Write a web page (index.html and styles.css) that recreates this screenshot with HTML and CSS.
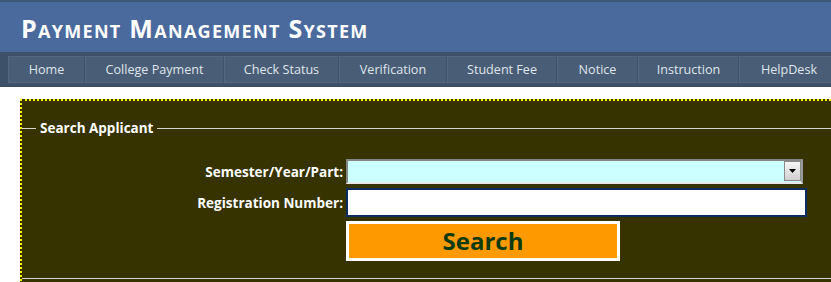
FILE: index.html
```html
<!DOCTYPE html>
<html>
<head>
<meta charset="utf-8">
<link rel="stylesheet" href="styles.css">
</head>
<body>
<header class="banner">
  <h1 class="title">Payment Management System</h1>
</header>
<nav class="menu">
  <a class="menu-item w-home">Home</a>
  <a class="menu-item w-college">College Payment</a>
  <a class="menu-item w-check">Check Status</a>
  <a class="menu-item w-verify">Verification</a>
  <a class="menu-item w-fee">Student Fee</a>
  <a class="menu-item w-notice">Notice</a>
  <a class="menu-item w-instr">Instruction</a>
  <a class="menu-item w-help">HelpDesk</a>
</nav>
<main class="panel">
  <fieldset class="search-set">
    <legend class="search-legend">Search Applicant</legend>
    <div class="form-grid">
      <label class="form-label">Semester/Year/Part:</label>
      <div class="select-wrap">
        <select class="semester-select"><option></option></select>
        <span class="select-btn">
          <svg width="8" height="5" viewBox="0 0 8 5"><path d="M0 0H7L3.5 4Z" fill="#000"/></svg>
        </span>
      </div>
      <label class="form-label">Registration Number:</label>
      <input class="reg-input" type="text">
      <span></span>
      <button class="search-btn" type="button">Search</button>
    </div>
  </fieldset>
</main>
</body>
</html>
```
FILE: styles.css
```css
html, body {
  margin: 0;
  padding: 0;
  background: #ffffff;
  overflow: hidden;
}
body {
  font-family: "Open Sans", "DejaVu Sans", sans-serif;
}
.banner {
  height: 50px;
  background: #4a6a9e;
  border-top: 2px solid #3e5878;
  display: flex;
  align-items: center;
  padding-left: 21px;
}
.title {
  margin: 0;
  color: #ffffff;
  font-family: "Open Sans", sans-serif;
  font-weight: 700;
  font-size: 25px;
  font-variant: small-caps;
  letter-spacing: 1.3px;
  line-height: 1;
  padding-top: 3px;
}
.menu {
  height: 35px;
  box-sizing: border-box;
  background: #3d5169;
  padding: 4px 0 4px 8px;
  display: flex;
  border-bottom: 1px solid #3a4c62;
}
.menu-item {
  box-sizing: border-box;
  height: 27px;
  background: #4a5d76;
  border: 1px solid #55687f;
  border-right-color: #3f5269;
  color: #dfe5ec;
  font-size: 12.6px;
  display: flex;
  align-items: center;
  justify-content: center;
  padding-bottom: 1px;
  flex: none;
}
.w-home { width: 77px; }
.w-college { width: 139px; }
.w-check { width: 115px; }
.w-verify { width: 108px; }
.w-fee { width: 110px; }
.w-notice { width: 81px; }
.w-instr { width: 101px; }
.w-help { width: 100px; }
.panel {
  margin: 12px -40px 0 20px;
  background: #363300;
  border: 2px dotted #ffff00;
  border-right: none;
  padding-top: 18px;
  height: 200px;
}
.search-set {
  margin: 0;
  padding: 0 0 17px 0;
  border: none;
  border-top: 1px solid #d6d6d0;
  border-bottom: 1px solid #d6d6d0;
  min-width: 0;
}
.search-legend {
  margin-left: 14px;
  padding: 0 4px;
  color: #ffffff;
  font-weight: 700;
  font-size: 13.5px;
}
.form-grid {
  display: grid;
  grid-template-columns: 321px 461px;
  column-gap: 3px;
  row-gap: 4px;
  margin-top: 22px;
  align-items: center;
}
.form-label {
  text-align: right;
  color: #ffffff;
  font-weight: 700;
  font-size: 13.5px;
}
.select-wrap {
  position: relative;
  width: 457px;
  height: 25px;
}
.semester-select {
  appearance: none;
  -webkit-appearance: none;
  box-sizing: border-box;
  width: 457px;
  height: 25px;
  margin: 0;
  background: #ccffff;
  border: 2px solid;
  border-color: #858585 #9a9a9a #e8e8e8 #858585;
  border-radius: 0;
  outline: none;
}
.select-btn {
  position: absolute;
  right: 2px;
  top: 2px;
  width: 17px;
  height: 20px;
  box-sizing: border-box;
  border: 1px solid #8a8a8a;
  background: linear-gradient(#f6f6f6, #cfcfcf);
  display: flex;
  align-items: center;
  justify-content: center;
}
.reg-input {
  box-sizing: border-box;
  width: 461px;
  height: 29px;
  margin: 0;
  border: 2px solid #0c2b5e;
  background: #ffffff;
  border-radius: 0;
  outline: none;
}
.search-btn {
  box-sizing: border-box;
  width: 274px;
  height: 40px;
  margin: 0;
  background: #ff9900;
  border: 3px solid #ffffff;
  border-radius: 0;
  color: #0e3a12;
  font-family: "Open Sans", sans-serif;
  font-weight: 700;
  font-size: 24px;
  padding: 0;
  line-height: 1;
}
```
